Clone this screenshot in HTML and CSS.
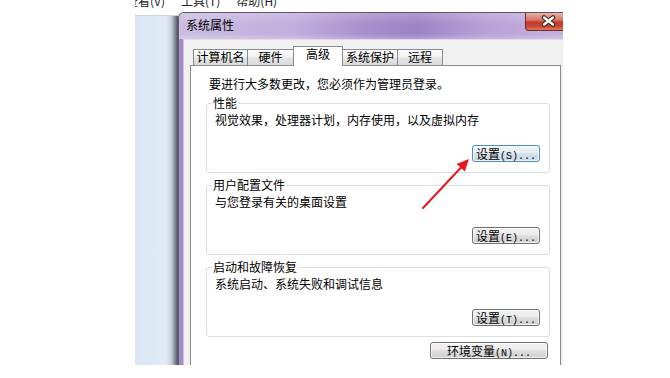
FILE: index.html
```html
<!DOCTYPE html>
<html lang="zh-CN">
<head>
  <meta charset="UTF-8" />
  <meta name="viewport" content="width=device-width, initial-scale=1" />
  <title>系统属性</title>
  <link rel="stylesheet" href="styles.css">
</head>
<body>
  <div class="screen">
    <div class="menubar">
      <span>查看(V)</span>
      <span>工具(T)</span>
      <span>帮助(H)</span>
    </div>

    <div class="windows">
      <div class="explorer-side"></div>

      <div class="dialog">
        <div class="titlebar">
          <span class="title">系统属性</span>
          <button class="close-btn" aria-label="关闭">
            <svg width="38" height="18" viewBox="0 0 38 18">
              <path d="M19 4.5 L28 11.5 M28 4.5 L19 11.5" stroke="#3b2522" stroke-width="4.6" stroke-linecap="round" fill="none" />
              <path d="M19 4.5 L28 11.5 M28 4.5 L19 11.5" stroke="#fff" stroke-width="2.4" stroke-linecap="round" fill="none" />
            </svg>
          </button>
        </div>

        <div class="client">
          <div class="tabs">
            <div class="tab tab-name">计算机名</div>
            <div class="tab tab-hw">硬件</div>
            <div class="tab tab-adv active">高级</div>
            <div class="tab tab-prot">系统保护</div>
            <div class="tab tab-remote">远程</div>
          </div>

          <div class="panel">
            <p class="notice">要进行大多数更改，您必须作为管理员登录。</p>

            <fieldset class="group">
              <legend>性能</legend>
              <p>视觉效果，处理器计划，内存使用，以及虚拟内存</p>
              <div class="actions">
                <button class="btn btn-focus">设置<span class="key">(S)...</span></button>
              </div>
            </fieldset>

            <fieldset class="group">
              <legend>用户配置文件</legend>
              <p>与您登录有关的桌面设置</p>
              <div class="actions">
                <button class="btn">设置<span class="key">(E)...</span></button>
              </div>
            </fieldset>

            <fieldset class="group">
              <legend>启动和故障恢复</legend>
              <p>系统启动、系统失败和调试信息</p>
              <div class="actions">
                <button class="btn">设置<span class="key">(T)...</span></button>
              </div>
            </fieldset>

            <div class="actions env">
              <button class="btn btn-wide">环境变量<span class="key">(N)...</span></button>
            </div>
          </div>
        </div>

        <!-- red annotation arrow pointing at the first settings button -->
        <svg class="arrow" width="65" height="77" viewBox="0 0 65 77">
          <line x1="8" y1="58" x2="46" y2="17.5" stroke="#e3191f" stroke-width="2" stroke-linecap="round" />
          <polygon points="54,9 49.8,21.6 41.6,14" fill="#e3191f" />
        </svg>
      </div>
    </div>
  </div>
</body>
</html>
```

FILE: styles.css
```css
* {
  box-sizing: border-box;
}

body {
  margin: 0;
  width: 670px;
  height: 378px;
  overflow: hidden;
  background: #fff;
  font-family: "Noto Sans CJK SC", sans-serif;
  font-size: 12px;
  color: #000;
}

.screen {
  padding-left: 135px;
}

.menubar {
  height: 12px;
  overflow: hidden;
  display: flex;
  color: #222;
}

.menubar span {
  margin-top: -6px;
  margin-left: 16px;
  line-height: 14px;
}

.menubar span:first-child {
  margin-left: -9px;
}

.windows {
  display: flex;
  align-items: flex-start;
}

.explorer-side {
  width: 43px;
  height: 350px;
  margin-top: 3px;
  border-top: 1px solid #c9d6e6;
  background: linear-gradient(to right, #dbe6f4 0%, #e1ebf7 72%, #c9d3de 84%, #7d828c 94%, #4d4f57 100%);
}

.dialog {
  position: relative;
  width: 385px;
  height: 353px;
  display: flex;
  flex-direction: column;
  overflow: hidden;
  background: #a28cc8;
  border-top: 1px solid #5b5767;
  border-left: 1px solid #5f5672;
  border-top-left-radius: 6px;
}

.titlebar {
  height: 26px;
  display: flex;
  align-items: flex-start;
  background:
    linear-gradient(to bottom, rgba(255, 255, 255, 0.18), rgba(255, 255, 255, 0) 45%, rgba(255, 255, 255, 0) 80%, rgba(255, 255, 255, 0.22)),
    linear-gradient(to right, #cbbde2 0%, #c1aedc 30%, #a78dcc 50%, #9e83c6 62%, #b8a1d7 80%, #c6b2de 100%);
}

.title {
  padding: 5px 0 0 7px;
  line-height: 14px;
}

.close-btn {
  margin-left: auto;
  width: 38px;
  height: 18px;
  padding: 0;
  border: 1px solid #6b2c25;
  border-top: none;
  border-right: none;
  border-bottom-left-radius: 4px;
  background: linear-gradient(to bottom, #e7b2a6 0%, #d9786a 40%, #c2392b 55%, #c94a35 80%, #dc7b5c 100%);
}

.close-btn svg {
  display: block;
  margin-left: -1px;
}

.client {
  flex: 1;
  display: flex;
  flex-direction: column;
  margin-left: 4px;
  padding: 6px 2px 0 6px;
  background: #f0f0f0;
  border-top: 1px solid #e2dcea;
  border-left: 1px solid #cbc6d4;
}

.tabs {
  position: relative;
  z-index: 1;
  display: flex;
  align-items: flex-end;
  height: 19px;
  padding-left: 3px;
}

.tab {
  height: 16px;
  margin-right: -1px;
  border: 1px solid #898c95;
  border-bottom: none;
  background: linear-gradient(to bottom, #fdfdfd 0%, #f1f1f1 45%, #e4e4e4 55%, #dadada 100%);
  line-height: 14px;
  text-align: center;
}

.tab.active {
  height: 20px;
  margin-bottom: -1px;
  background: #fff;
}

.tab-name { width: 55px; }
.tab-hw { width: 47px; }
.tab-adv { width: 50px; }
.tab-prot { width: 56px; }
.tab-remote { width: 46px; }

.panel {
  flex: 1;
  padding: 11px 10px 0 15px;
  background: #fff;
  border: 1px solid #898c95;
  border-bottom: none;
}

.notice {
  margin: 0 0 5px 3px;
  line-height: 14px;
}

.group {
  margin: 0 0 5px;
  padding: 3px 9px 10px 8px;
  min-width: 0;
  border: 1px solid #d5dfe5;
  border-radius: 3px;
}

.group legend {
  margin-left: -3px;
  padding: 0 1px;
  line-height: 14px;
}

.group p {
  margin: 0;
  line-height: 14px;
}

.actions {
  display: flex;
  justify-content: flex-end;
  margin-top: 18px;
}

.actions.env {
  margin-top: 5px;
  padding-right: 2px;
}

.btn {
  width: 68px;
  height: 17px;
  padding: 0;
  font-family: inherit;
  font-size: 12px;
  line-height: 15px;
  color: #000;
  border: 1px solid #707070;
  border-radius: 3px;
  background: linear-gradient(to bottom, #f3f3f3 0%, #ebebeb 45%, #dddddd 52%, #cfcfcf 100%);
  box-shadow: inset 0 0 0 1px rgba(255, 255, 255, 0.7);
}

.btn-focus {
  border-color: #4b8dc4;
  background: linear-gradient(to bottom, #eef5fa 0%, #e4edf4 45%, #d5e1ea 52%, #c9d7e2 100%);
}

.btn-wide {
  width: 118px;
}

.key {
  font-family: "Liberation Mono", monospace;
  font-size: 10px;
}

.arrow {
  position: absolute;
  left: 236px;
  top: 137px;
}
```
